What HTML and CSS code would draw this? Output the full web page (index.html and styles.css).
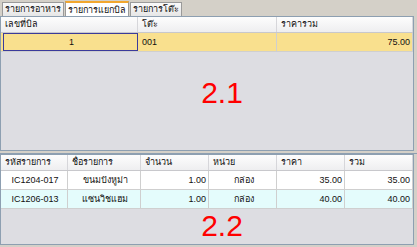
FILE: index.html
```html
<!DOCTYPE html>
<html>
<head>
    <title>แยกบิล</title>
    <link rel="stylesheet" href="styles.css">
</head>
<body>
    <div class="tabs">
        <div class="tab">รายการอาหาร</div>
        <div class="tab active">รายการแยกบิล</div>
        <div class="tab">รายการโต๊ะ</div>
    </div>

    <div class="grid grid-top">
        <div class="row head cols-3">
            <div class="cell">เลขที่บิล</div>
            <div class="cell">โต๊ะ</div>
            <div class="cell">ราคารวม</div>
        </div>
        <div class="row data yellow cols-3">
            <div class="cell center selected">1</div>
            <div class="cell">001</div>
            <div class="cell right">75.00</div>
        </div>
        <div class="label">2.1</div>
    </div>

    <div class="splitter"></div>

    <div class="grid grid-bottom">
        <div class="row head cols-6">
            <div class="cell">รหัสรายการ</div>
            <div class="cell">ชื่อรายการ</div>
            <div class="cell">จำนวน</div>
            <div class="cell">หน่วย</div>
            <div class="cell">ราคา</div>
            <div class="cell">รวม</div>
        </div>
        <div class="row data white cols-6">
            <div class="cell center">IC1204-017</div>
            <div class="cell center">ขนมปังหูม่า</div>
            <div class="cell right">1.00</div>
            <div class="cell center">กล่อง</div>
            <div class="cell right">35.00</div>
            <div class="cell right">35.00</div>
        </div>
        <div class="row data cyan cols-6">
            <div class="cell center">IC1206-013</div>
            <div class="cell center">แซนวิชแฮม</div>
            <div class="cell right">1.00</div>
            <div class="cell center">กล่อง</div>
            <div class="cell right">40.00</div>
            <div class="cell right">40.00</div>
        </div>
        <div class="label">2.2</div>
    </div>
</body>
</html>
```

FILE: styles.css
```css
body {
    margin: 0;
    width: 417px;
    height: 247px;
    background: #d4d0c8;
    font-family: "Liberation Sans", sans-serif;
    font-size: 9px;
    color: #111111;
    overflow: hidden;
}

.tabs {
    display: flex;
    align-items: flex-end;
    height: 16px;
    padding-left: 2px;
}

.tab {
    height: 13px;
    line-height: 13px;
    padding: 0 2px;
    margin-right: 1px;
    border: 1px solid #9a9a9a;
    border-bottom: none;
    background: linear-gradient(#fafafa, #e6e6e6);
    white-space: nowrap;
}

.tab.active {
    height: 14px;
    line-height: 14px;
    border-top: 2px solid #f2a72e;
    background: #ffffff;
    margin-bottom: -1px;
}

.grid {
    position: relative;
    margin-right: 3px;
    border: 1px solid #8d9fb1;
    background: #dddde2;
}

.grid-top {
    height: 133px;
}

.grid-bottom {
    height: 89px;
}

.splitter {
    height: 2px;
    border-bottom: 1px solid #8d9fb1;
}

.row {
    display: grid;
}

.cols-3 {
    grid-template-columns: 137px 139px 1fr;
}

.cols-6 {
    grid-template-columns: 67px 73px 68px 68px 68px 1fr;
}

.head {
    height: 15px;
    background: linear-gradient(#fdfdfd, #eeeef0);
    border-bottom: 1px solid #c8c8cc;
}

.head .cell {
    line-height: 15px;
    padding-left: 4px;
    border-right: 1px solid #d6d6da;
}

.data {
    height: 18px;
    border-bottom: 1px solid #cfcfcf;
}

.data .cell {
    line-height: 18px;
    padding: 0 2px 0 4px;
    border-right: 1px solid #cfcfcf;
    white-space: nowrap;
}

.yellow {
    background: #f9e08e;
}

.white {
    background: #ffffff;
}

.cyan {
    background: #e4fcfc;
}

.center {
    text-align: center;
}

.right {
    text-align: right;
}

.cell.selected {
    border: 1px solid #3b3b9b;
    line-height: 16px;
    margin-left: 2px;
}

.label {
    text-align: center;
    margin-left: 30px;
    font-size: 30px;
    color: #ff0000;
}

.grid-top .label {
    margin-top: 24px;
}

.grid-bottom .label {
    margin-top: 0;
}
```
